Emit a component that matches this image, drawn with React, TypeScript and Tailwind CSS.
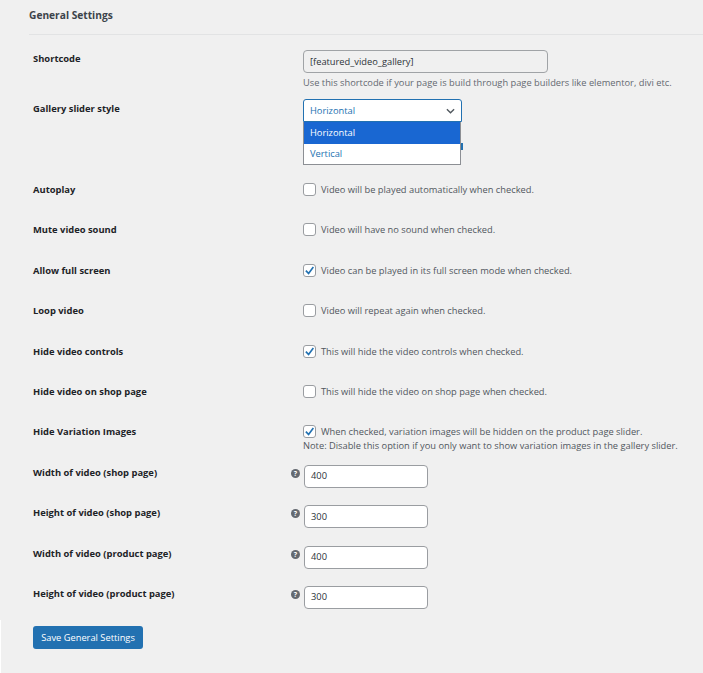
import React from 'react';

const font = { fontFamily: '"Open Sans", "Noto Sans", sans-serif' };

function Label({ children }: { children: React.ReactNode }) {
  return <div className="mt-[1px] w-[270px] shrink-0 text-[9.4px] leading-[14px] font-bold text-[#1d2327]">{children}</div>;
}

function CheckRow({ label, text, checked, note }: { label: string; text: string; checked?: boolean; note?: string }) {
  return (
    <div className="flex h-[40.4px] items-start">
      <Label>{label}</Label>
      <div>
        <div className="flex items-center gap-[5px]">
          <span className="flex h-[13px] w-[13px] items-center justify-center rounded-[3px] border border-[#9a9da1] bg-white">
            {checked && (
              <svg viewBox="0 0 12 12" className="h-[11px] w-[11px]" fill="none" stroke="#2271b1" strokeWidth="1.8">
                <path d="M2 6.2 5 9.2 10.2 2.2" />
              </svg>
            )}
          </span>
          <span className="text-[9.3px] leading-[15px] text-[#50575e]">{text}</span>
        </div>
        {note && <p className="mt-[-1px] whitespace-nowrap text-[9.3px] leading-[15px] text-[#50575e]">{note}</p>}
      </div>
    </div>
  );
}

function NumberRow({ label, value }: { label: string; value: string }) {
  return (
    <div className="flex h-[40.4px] items-start">
      <Label>{label}</Label>
      <div className="-ml-[12px] flex items-start gap-[4px]">
        <span className="mt-[4px] flex h-[9px] w-[9px] items-center justify-center rounded-full bg-[#646970] text-[7px] leading-none font-bold text-white">?</span>
        <div className="flex h-[23px] w-[124px] items-center rounded-[4px] border border-[#9a9da1] bg-white px-[6px] text-[9.3px] text-[#2c3338]">
          {value}
        </div>
      </div>
    </div>
  );
}

export default function App() {
  return (
    <div className="relative h-[673px] w-[703px] overflow-hidden bg-[#f0f0f0]" style={font}>
      <span className="absolute top-[620px] left-0 h-[53px] w-[1px] bg-white" />
      <div className="ml-[29px]">
        <h2 className="flex h-[35px] items-start border-b border-[#e2e3e4] pt-[8px] text-[10.2px] leading-[14px] font-bold text-[#3c434a]">General Settings</h2>
      </div>
      <div className="pl-[33px]">
        <div className="flex h-[49px] items-start pt-[16px]">
          <Label>Shortcode</Label>
          <div className="-mt-[1px]">
            <div className="flex h-[23px] w-[245px] items-center rounded-[4px] border border-[#a0a3a6] bg-[#f0f0f0] px-[6px] text-[9.3px] text-[#2c3338]">
              [featured_video_gallery]
            </div>
            <p className="mt-[2px] whitespace-nowrap text-[9.3px] leading-[15px] text-[#646970]">
              Use this shortcode if your page is build through page builders like elementor, divi etc.
            </p>
          </div>
        </div>
        <div className="flex h-[98px] items-start pt-[17px]">
          <Label>Gallery slider style</Label>
          <div className="relative w-[159px]">
            <div className="-mt-[2px] flex h-[23px] items-center justify-between rounded-t-[3px] border border-[#2271b1] bg-white pt-[1px] pr-[6px] pl-[6px] text-[9.3px] text-[#2271b1]">
              Horizontal
              <svg viewBox="0 0 10 6" className="h-[6px] w-[9px]" fill="none" stroke="#50575e" strokeWidth="1.5">
                <path d="M1 1 5 5 9 1" />
              </svg>
            </div>
            <span className="absolute top-[42px] left-[158px] h-[7px] w-[2px] bg-[#2271b1]" />
            <div className="absolute top-[21px] left-0 w-[158px] border border-t-0 border-[#8c8f94] bg-white text-[9.3px] text-[#2271b1]">
              <div className="flex h-[22px] items-center bg-[#1967d2] px-[6px] text-white">Horizontal</div>
              <div className="flex h-[20px] items-center px-[6px]">Vertical</div>
            </div>
          </div>
        </div>
        <CheckRow label="Autoplay" text="Video will be played automatically when checked." />
        <CheckRow label="Mute video sound" text="Video will have no sound when checked." />
        <CheckRow label="Allow full screen" text="Video can be played in its full screen mode when checked." checked />
        <CheckRow label="Loop video" text="Video will repeat again when checked." />
        <CheckRow label="Hide video controls" text="This will hide the video controls when checked." checked />
        <CheckRow label="Hide video on shop page" text="This will hide the video on shop page when checked." />
        <CheckRow
          label="Hide Variation Images"
          text="When checked, variation images will be hidden on the product page slider."
          note="Note: Disable this option if you only want to show variation images in the gallery slider."
          checked
        />
        <NumberRow label="Width of video (shop page)" value="400" />
        <NumberRow label="Height of video (shop page)" value="300" />
        <NumberRow label="Width of video (product page)" value="400" />
        <NumberRow label="Height of video (product page)" value="300" />
        <button className="block h-[23px] w-[110px] rounded-[3px] bg-[#2271b1] text-[9.3px] text-white">Save General Settings</button>
      </div>
    </div>
  );
}
